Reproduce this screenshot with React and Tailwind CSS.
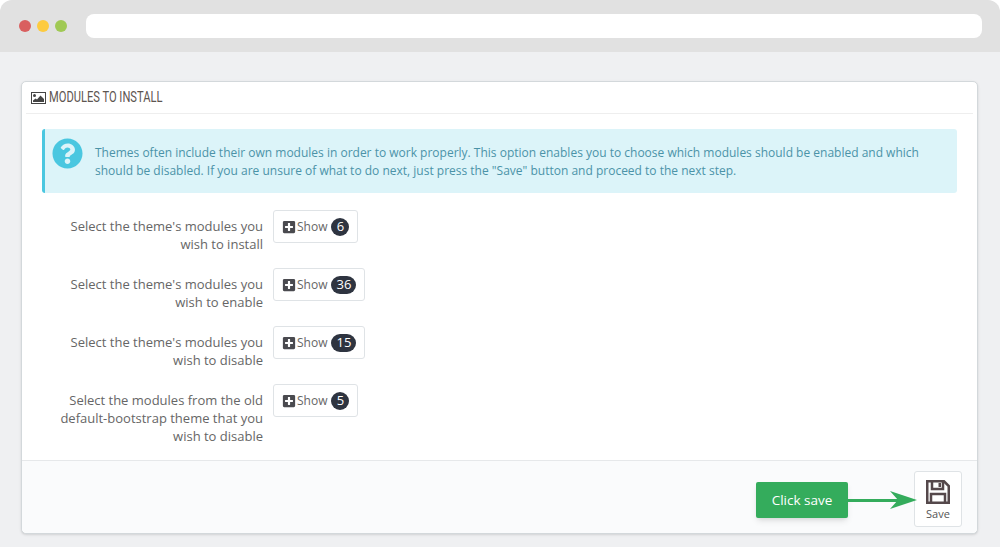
import React from 'react';
import { FaPlusSquare, FaQuestionCircle } from 'react-icons/fa';

const moduleRows = [
  { label: ["Select the theme's modules you", 'wish to install'], count: 6 },
  { label: ["Select the theme's modules you", 'wish to enable'], count: 36 },
  { label: ["Select the theme's modules you", 'wish to disable'], count: 15 },
  { label: ['Select the modules from the old', 'default-bootstrap theme that you', 'wish to disable'], count: 5 },
];

const PictureIcon = () => (
  <svg width="15" height="12" viewBox="0 0 15 12" className="mr-[3px] shrink-0">
    <rect x="0.5" y="0.5" width="14" height="11" fill="none" stroke="#444" />
    <circle cx="3.5" cy="3.5" r="1.5" fill="#444" />
    <path d="M2 10V8.5L4.5 6.5L6 7.5L9.5 3.5L13 7V10Z" fill="#444" />
  </svg>
);

const SaveIcon = () => (
  <svg width="24" height="24" viewBox="0 0 24 24" className="shrink-0">
    <path d="M1.25 1.25H18L22.75 6V22.75H1.25Z" fill="none" stroke="#55484b" strokeWidth="2.5" />
    <path d="M6 1.25V9H17V1.25" fill="none" stroke="#55484b" strokeWidth="2.5" />
    <path d="M12.5 3h2.5v4h-2.5z" fill="#55484b" />
    <path d="M5 23V14H19V23" fill="none" stroke="#55484b" strokeWidth="2.5" />
  </svg>
);

const ModuleRow = ({ label, count }) => (
  <div className="flex items-start mb-[15px]">
    <div className="w-[221px] pt-[7px] text-right text-[13px] leading-[18px] text-[#666]">
      {label.map((line) => (
        <div key={line}>{line}</div>
      ))}
    </div>
    <button className="ml-[10px] h-[33px] pl-[8px] pr-[8px] flex items-center bg-white border border-[#dfe3e6] rounded-[3px] text-[12px] text-[#666]">
      <FaPlusSquare className="text-[#4a4a4f] text-[14px] mr-[1px]" />
      <span>Show</span>
      <span className="ml-[4px] h-[18px] min-w-[18px] px-[5px] flex items-center justify-center rounded-full bg-[#2e3440] text-white text-[13px] leading-none">
        {count}
      </span>
    </button>
  </div>
);

export default function App() {
  return (
    <div className="h-[547px] bg-white font-['Open_Sans',sans-serif] overflow-hidden">
      <div className="h-[52px] bg-[#e1e1e1] rounded-t-[12px] flex items-center pl-[19px] pr-[18px]">
        <div className="flex gap-[6px]">
          <span className="w-[12px] h-[12px] rounded-full bg-[#d95f5f]" />
          <span className="w-[12px] h-[12px] rounded-full bg-[#fdcb3f]" />
          <span className="w-[12px] h-[12px] rounded-full bg-[#a0c954]" />
        </div>
        <div className="ml-[19px] flex-1 h-[24px] bg-white rounded-[8px]" />
      </div>
      <div className="h-[495px] bg-[#eff0f2] pt-[29px] pl-[21px] pr-[22px]">
        <div className="h-[453px] bg-white border border-[#d3d8db] rounded-[5px] flex flex-col shadow-sm">
          <div className="mx-[4px] h-[32px] shrink-0 border-b border-[#eeeeee] flex items-center pl-[5px]">
            <PictureIcon />
            <span className="font-['Roboto',sans-serif] text-[14px] text-[#5d5550] scale-x-[0.796] origin-left whitespace-nowrap">MODULES TO INSTALL</span>
          </div>
          <div className="flex-1 px-[20px] pt-[15px]">
            <div className="h-[64px] bg-[#dcf4f9] border-l-[3px] border-[#4ac7e0] rounded-[3px] flex items-start mb-[17px]">
              <FaQuestionCircle className="ml-[7px] mt-[9px] shrink-0 text-[#4ac7e0] text-[31px]" />
              <p className="ml-[12px] mt-[15px] pr-[20px] text-[12px] leading-[18px] text-[#4b93a8]">
                Themes often include their own modules in order to work properly. This option enables you to choose which modules should be enabled and which should be disabled. If you are unsure of what to do next, just press the "Save" button and proceed to the next step.
              </p>
            </div>
            {moduleRows.map((row) => (
              <ModuleRow key={row.count} label={row.label} count={row.count} />
            ))}
          </div>
          <div className="h-[73px] shrink-0 bg-[#fafbfc] border-t border-[#e6e8ea] rounded-b-[5px] flex items-start justify-end pt-[10px] pr-[15px]">
            <div className="mt-[11px] w-[92px] h-[36px] bg-[#34ac5c] rounded-[2px] shadow-md flex items-center justify-center text-white text-[13.5px]">
              Click save
            </div>
            <svg width="69" height="18" viewBox="0 0 69 18" className="mt-[20px] -mr-[3px] relative z-10 shrink-0">
              <path d="M0 8h50v3H0z" fill="#34ac5c" />
              <path d="M42 0 L69 9 L42 18 L50 9 Z" fill="#34ac5c" />
            </svg>
            <button className="w-[48px] h-[56px] bg-white border border-[#dfe3e6] rounded-[3px] flex flex-col items-center pt-[8px] text-[#555] text-[11px]">
              <SaveIcon />
              <span className="mt-[2px]">Save</span>
            </button>
          </div>
        </div>
      </div>
    </div>
  );
}
